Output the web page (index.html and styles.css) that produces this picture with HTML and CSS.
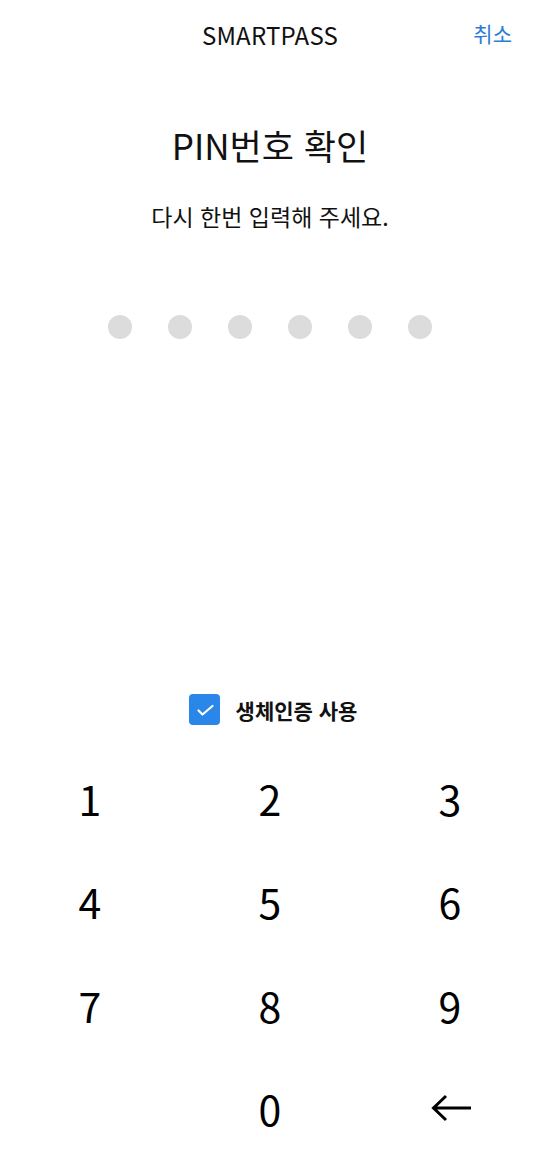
FILE: index.html
```html
<!DOCTYPE html>
<html lang="ko">
<head>
    <meta charset="UTF-8">
    <meta name="viewport" content="width=device-width, initial-scale=1.0">
    <title>SMARTPASS</title>
    <link rel="stylesheet" href="styles.css">
</head>
<body>
    <div class="screen">
        <header class="topbar">
            <span class="brand">SMARTPASS</span>
            <a class="cancel" href="#">취소</a>
        </header>

        <section class="prompt">
            <h1 class="title">PIN번호 확인</h1>
            <p class="subtitle">다시 한번 입력해 주세요.</p>
        </section>

        <div class="dots">
            <span class="dot"></span>
            <span class="dot"></span>
            <span class="dot"></span>
            <span class="dot"></span>
            <span class="dot"></span>
            <span class="dot"></span>
        </div>

        <label class="bio">
            <span class="checkbox">
                <svg width="31" height="31" viewBox="0 0 31 31"><path d="M9.5 16.5l4 4 10-8.5" fill="none" stroke="#fff" stroke-width="2.2" stroke-linecap="round" stroke-linejoin="round"/></svg>
            </span>
            <span class="bio-text">생체인증 사용</span>
        </label>

        <div class="keypad">
            <button class="key">1</button>
            <button class="key">2</button>
            <button class="key">3</button>
            <button class="key">4</button>
            <button class="key">5</button>
            <button class="key">6</button>
            <button class="key">7</button>
            <button class="key">8</button>
            <button class="key">9</button>
            <span class="key empty"></span>
            <button class="key">0</button>
            <button class="key back">
                <svg width="42" height="28" viewBox="0 0 42 28"><path d="M41 14H4M16 2L3.5 14 16 26" fill="none" stroke="#000" stroke-width="3"/></svg>
            </button>
        </div>
    </div>
</body>
</html>
```

FILE: styles.css
```css
body { margin: 0; background: #fff; font-family: "Noto Sans CJK KR", "Noto Sans", sans-serif; color: #111; }
.screen { width: 540px; height: 1176px; display: flex; flex-direction: column; }

.topbar { position: relative; height: 68px; display: flex; align-items: center; justify-content: center; }
.brand { font-size: 24px; color: #111; letter-spacing: 0.2px; }
.cancel { position: absolute; right: 28px; top: 18px; font-size: 21px; color: #2c7bd6; text-decoration: none; }

.prompt { text-align: center; margin-top: 52px; }
.title { margin: 0; font-size: 35px; font-weight: 400; line-height: 50px; }
.subtitle { margin: 31px 0 0; font-size: 23px; line-height: 30px; }

.dots { display: flex; justify-content: center; gap: 36px; margin-top: 84px; }
.dot { width: 24px; height: 24px; border-radius: 50%; background: #dcdcdc; }

.bio { display: flex; align-items: center; justify-content: center; gap: 16px; margin-top: 355px; padding-left: 6px; }
.checkbox { width: 31px; height: 31px; border-radius: 4px; background: #2a86e8; display: flex; align-items: center; justify-content: center; }
.checkbox svg { display: block; }
.bio-text { font-size: 21px; font-weight: 700; color: #111; }

.keypad { display: grid; grid-template-columns: repeat(3, 180px); grid-auto-rows: 103.5px; margin-top: 21px; }
.key { border: 0; background: none; padding: 0; font-family: inherit; font-size: 41px; color: #000; display: flex; align-items: center; justify-content: center; }
.back { padding-left: 2px; }
.back svg { display: block; }
```
